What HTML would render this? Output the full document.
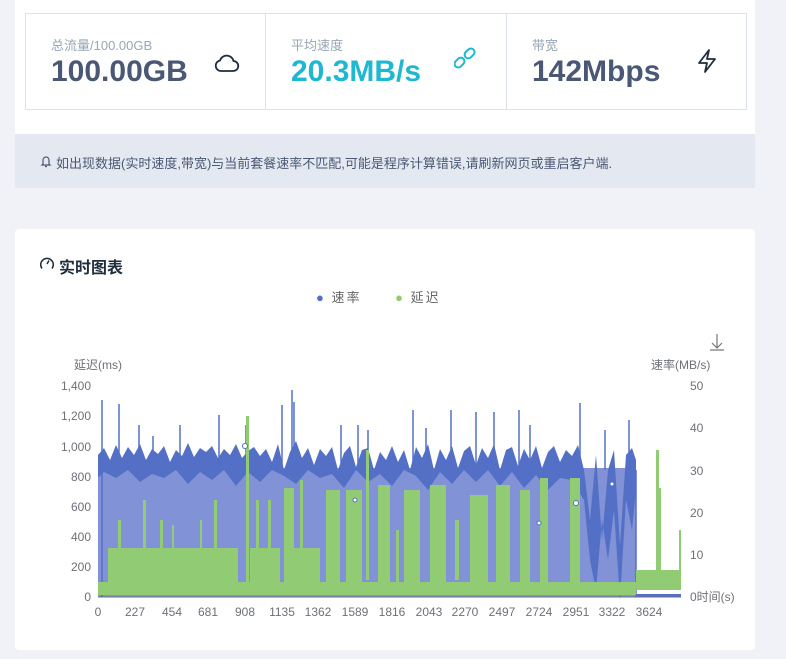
<!DOCTYPE html>
<html><head><meta charset="utf-8"><style>
*{margin:0;padding:0;box-sizing:border-box}
body{width:786px;height:659px;background:#f0f2f7;font-family:"Liberation Sans","Noto Sans CJK SC",sans-serif;position:relative;overflow:hidden}
.card{position:absolute;left:15px;width:740px;background:#fff}
.stat{position:absolute;top:13px;height:97px;border:1px solid #dde3e9;background:#fff}
.lbl{position:absolute;left:25px;top:21px;font-size:13px;color:#98a6b5}
.val{position:absolute;left:25px;top:41px;font-size:30px;font-weight:bold;color:#4a5875}
.ic{position:absolute;top:36px}
</style></head><body>
<div class="card" style="top:0;height:134px"></div>
<div class="stat" style="left:25px;width:241px"><div class="lbl">总流量/100.00GB</div><div class="val">100.00GB</div>
<svg class="ic" style="left:188px;top:38px" width="26" height="22" viewBox="0 0 26 22"><path d="M7 19h12a5 5 0 0 0 .5-10A7 7 0 0 0 6 8.5 5.3 5.3 0 0 0 7 19z" fill="none" stroke="#1f2d3d" stroke-width="1.8"/></svg></div>
<div class="stat" style="left:265px;width:242px"><div class="lbl">平均速度</div><div class="val" style="color:#1fb8d1">20.3MB/s</div>
<svg class="ic" style="left:188px;top:33px" width="22" height="22" viewBox="0 0 24 24"><g fill="none" stroke="#1fb8d1" stroke-width="2.2"><rect x="2" y="11" width="8" height="12" rx="4" transform="rotate(45 6 17)"/><rect x="13" y="1" width="8" height="12" rx="4" transform="rotate(45 17 7)"/></g></svg></div>
<div class="stat" style="left:506px;width:241px"><div class="lbl">带宽</div><div class="val">142Mbps</div>
<svg class="ic" style="left:188px;top:34px" width="24" height="26" viewBox="0 0 24 26"><path d="M14 2 4 15h8l-2 9 10-13h-8z" fill="none" stroke="#1f2d3d" stroke-width="1.8" stroke-linejoin="round"/></svg></div>
<div style="position:absolute;left:15px;top:134px;width:740px;height:54px;background:#e4e8f0;font-size:13px;color:#4a5875;padding:19px 0 0 41px">如出现数据(实时速度,带宽)与当前套餐速率不匹配,可能是程序计算错误,请刷新网页或重启客户端.</div>
<svg style="position:absolute;left:40px;top:155px" width="12" height="13" viewBox="0 0 12 13"><path d="M3 9V5a3 3 0 0 1 6 0v4l1 1H2zM5 11.5h2" fill="none" stroke="#4a5875" stroke-width="1.2"/></svg>
<div class="card" style="top:229px;height:421px;border-radius:4px"></div>
<svg style="position:absolute;left:39px;top:256px" width="16" height="16" viewBox="0 0 16 16"><path d="M3 12.5A6.3 6.3 0 1 1 13 12.5" fill="none" stroke="#1f2d3d" stroke-width="1.5"/><path d="M8 8 10 4.5" stroke="#1f2d3d" stroke-width="1.5"/></svg>
<div style="position:absolute;left:59px;top:254px;font-size:16px;font-weight:bold;color:#1f2d3d">实时图表</div>
<div style="position:absolute;left:316px;top:287px;font-size:13px;color:#666;letter-spacing:2px"><span style="color:#5470c6">●</span> 速率 &nbsp;&nbsp;&nbsp;&nbsp;&nbsp;<span style="color:#91cc75">●</span> 延迟</div>
<svg style="position:absolute;left:0;top:0" width="786" height="659">
<g font-size="12" fill="#6e7079" font-family="Liberation Sans,Noto Sans CJK SC,sans-serif">
<text x="74" y="369">延迟(ms)</text><text x="651" y="369">速率(MB/s)</text>
<g text-anchor="end"><text x="91" y="390">1,400</text><text x="91" y="420">1,200</text><text x="91" y="451">1,000</text><text x="91" y="481">800</text><text x="91" y="511">600</text><text x="91" y="541">400</text><text x="91" y="571">200</text><text x="91" y="601">0</text></g>
<text x="690" y="390">50</text><text x="690" y="432">40</text><text x="690" y="475">30</text><text x="690" y="517">20</text><text x="690" y="559">10</text><text x="690" y="601">0时间(s)</text>
<g text-anchor="middle"><text x="98" y="616">0</text><text x="135" y="616">227</text><text x="172" y="616">454</text><text x="208" y="616">681</text><text x="245" y="616">908</text><text x="282" y="616">1135</text><text x="318" y="616">1362</text><text x="355" y="616">1589</text><text x="392" y="616">1816</text><text x="429" y="616">2043</text><text x="465" y="616">2270</text><text x="502" y="616">2497</text><text x="539" y="616">2724</text><text x="576" y="616">2951</text><text x="612" y="616">3322</text><text x="649" y="616">3624</text></g>
</g>
<path d="M717 334v14m-5-5 5 5 5-5M710 350h14" stroke="#777" fill="none" stroke-width="1.2"/>
<rect x="98" y="468" width="538" height="129" fill="#8193d6"/>
<path d="M98 597V455L104 448 110 460 116 445 122 458 128 447 134 455 140 444 146 460 152 449 158 454 164 446 170 462 176 450 182 456 188 443 194 457 200 448 206 452 212 446 218 458 224 449 230 455 236 444 242 458 248 451 254 447 260 456 266 449 272 462 278 444 284 470 290 452 296 441 302 458 308 448 314 465 320 449 326 456 332 447 338 470 344 453 350 446 356 467 362 450 368 448 374 470 380 452 386 460 392 446 398 462 404 450 410 470 416 447 422 458 428 444 434 470 440 449 446 460 452 446 458 468 464 451 470 446 476 465 482 448 488 458 494 444 500 470 506 450 512 447 518 466 524 449 530 460 536 446 542 468 548 452 554 446 560 462 566 450 572 456 578 445 584 470 590 520 596 455 602 540 608 470 614 450 620 545 626 455 632 448 636 460V490L632 530 626 500 620 600 614 510 608 560 602 520 596 590 590 560 584 500 578 490 572 480 560 478 548 490 536 475 524 488 512 472 500 486 488 470 476 482 464 470 452 484 440 472 428 490 416 476 404 470 392 486 380 474 368 482 356 470 344 488 332 474 320 478 308 470 296 484 284 476 272 470 260 482 248 472 236 486 224 470 212 480 200 472 188 484 176 470 164 478 152 474 140 482 128 470 116 478 104 472 98 478z" fill="#5470c6"/>
<path d="M102 400V597M119 404V470M139 425V470M153 436V470M180 425V470M219 415V470M246 425V470M282 405V470M292 390V470M294 402V470M341 425V470M358 425V470M368 430V470M413 410V470M426 428V470M451 410V470M476 412V470M494 412V470M519 410V470M530 425V470M580 403V470M605 430V470M629 420V470M636 470V597" stroke="#5470c6" stroke-width="1.5"/>
<rect x="636" y="594" width="45" height="3" fill="#5470c6"/>
<g fill="#91cc75">
<rect x="98" y="582" width="538" height="13"/>
<rect x="108" y="548" width="130" height="34"/><rect x="250" y="548" width="30" height="34"/><rect x="290" y="548" width="30" height="34"/>
<rect x="118" y="520" width="3" height="62"/><rect x="143" y="500" width="3" height="82"/><rect x="160" y="520" width="3" height="62"/><rect x="172" y="525" width="2" height="60"/><rect x="200" y="520" width="2" height="60"/><rect x="214" y="500" width="3" height="82"/>
<rect x="246" y="416" width="3" height="166"/><rect x="256" y="500" width="3" height="82"/><rect x="268" y="500" width="3" height="82"/>
<rect x="284" y="488" width="10" height="94"/><rect x="300" y="480" width="3" height="100"/>
<rect x="326" y="490" width="14" height="92"/><rect x="346" y="490" width="16" height="92"/><rect x="366" y="450" width="3" height="130"/>
<rect x="378" y="485" width="12" height="97"/><rect x="404" y="490" width="16" height="92"/><rect x="430" y="485" width="16" height="97"/>
<rect x="470" y="495" width="18" height="87"/><rect x="496" y="485" width="14" height="97"/><rect x="520" y="490" width="10" height="92"/><rect x="540" y="478" width="8" height="104"/><rect x="570" y="478" width="10" height="104"/>
<rect x="455" y="520" width="4" height="60"/><rect x="396" y="530" width="3" height="52"/>
<rect x="636" y="570" width="45" height="20"/><rect x="656" y="450" width="3" height="140"/><rect x="659" y="488" width="2" height="100"/><rect x="679" y="530" width="2" height="60"/>
</g>
<rect x="580" y="588" width="56" height="3" fill="#91cc75"/>
<line x1="98" y1="597" x2="681" y2="597" stroke="#6e7079"/>
<circle cx="245" cy="446" r="2.5" fill="#fff" stroke="#5470c6"/><circle cx="355" cy="500" r="2" fill="#fff" stroke="#5470c6"/><circle cx="539" cy="523" r="2" fill="#fff" stroke="#5470c6"/><circle cx="576" cy="503" r="2.5" fill="#fff" stroke="#5470c6"/><circle cx="612" cy="484" r="2" fill="#fff" stroke="#5470c6"/>
</svg>
</body></html>
